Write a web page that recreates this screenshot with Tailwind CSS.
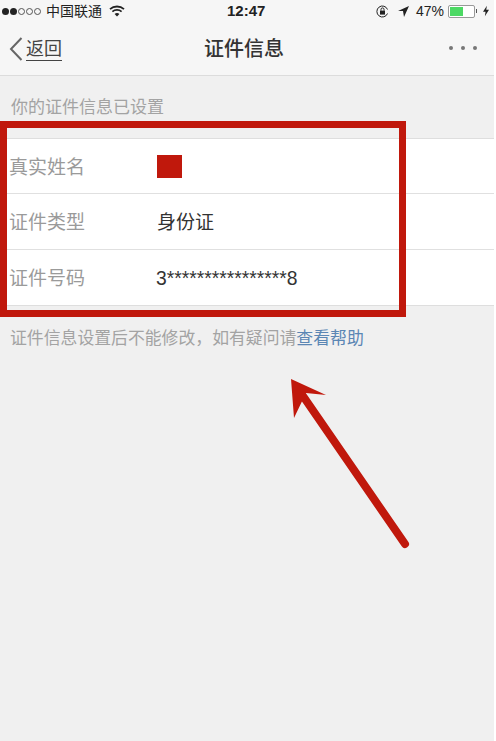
<!DOCTYPE html>
<html lang="zh-CN">
<head>
    <meta charset="UTF-8">
    <meta name="viewport" content="width=device-width, initial-scale=1.0">
    <title>证件信息</title>
    <script src="https://cdn.jsdelivr.net/npm/@tailwindcss/browser@4"></script>
</head>
<body class="bg-white">
<div class="relative h-[741px] w-[494px] overflow-hidden bg-[#f0f0f0] font-['Liberation_Sans','Noto_Sans_CJK_SC',sans-serif]">

    <!-- Status bar + nav -->
    <header class="h-[76px] border-b border-[#dcdcdc] bg-[#f6f6f6]">
        <div class="flex h-[21px] items-center pl-[2px] pt-[1px] text-[#222]">
            <div class="flex w-[225px] items-center">
                <div class="flex items-center gap-[1px]">
                    <span class="h-[7px] w-[7px] rounded-full bg-[#222]"></span>
                    <span class="h-[7px] w-[7px] rounded-full bg-[#222]"></span>
                    <span class="h-[7px] w-[7px] rounded-full border border-[#555]"></span>
                    <span class="h-[7px] w-[7px] rounded-full border border-[#555]"></span>
                    <span class="h-[7px] w-[7px] rounded-full border border-[#555]"></span>
                </div>
                <span class="ml-[5px] text-[14px]">中国联通</span>
                <svg class="ml-[7px]" width="16" height="12" viewBox="0 0 16 12" fill="none" stroke="#222" stroke-width="1.8">
                    <path d="M1 4.200C5 .6 11 .6 15 4.200"/>
                    <path d="M3.400 6.600C6 4.400 10 4.400 12.600 6.600"/>
                    <path d="M8 11.500 5.600 8.900C7 7.800 9 7.800 10.400 8.900Z" fill="#222" stroke="none"/>
                </svg>
            </div>
            <span class="w-[40px] text-[15px] font-bold">12:47</span>
            <div class="ml-[109px] flex items-center">
                <svg width="13" height="13" viewBox="0 0 13 13" fill="none" stroke="#222">
                    <path d="M11.500 8.500A5.500 5.500 0 1 1 11.500 4.500"/>
                    <rect x="4" y="5.600" width="5" height="4" fill="#222" stroke="none"/>
                    <path d="M5 5.600V4.400a1.500 1.500 0 0 1 3 0v1.200"/>
                </svg>
                <svg class="ml-[9px]" width="11" height="11" viewBox="0 0 11 11"><path d="M11 0 0 5h5l1 6Z" fill="#222"/></svg>
                <span class="ml-[7px] text-[14px]">47%</span>
                <div class="ml-[4px] h-[13px] w-[27px] rounded-[2px] border border-[#999] bg-white p-[1px]">
                    <div class="h-full w-[13px] bg-[#4cd964]"></div>
                </div>
                <span class="ml-[1px] h-[4px] w-[1px] bg-[#555]"></span>
                <svg class="ml-[6px]" width="6" height="12" viewBox="0 0 7 12"><path d="M4.500 0 0 7h3l-.8 5L7 4.600H3.800Z" fill="#222"/></svg>
            </div>
        </div>
        <div class="relative flex h-[54px] items-center pl-[204px]">
            <div class="absolute left-[9px] top-[16px] flex items-center">
                <svg width="14" height="24" viewBox="0 0 14 24" fill="none" stroke="#666" stroke-width="2">
                    <path d="M12.500 1 2 12l10.500 11"/>
                </svg>
                <span class="ml-[3px] border-b border-[#444] text-[18px] leading-[22px] text-[#444]">返回</span>
            </div>
            <h1 class="mt-[1px] text-[20px] font-medium text-[#333]">证件信息</h1>
            <div class="absolute right-[17px] top-[25px] flex gap-[8px]">
                <span class="h-[4px] w-[4px] rounded-full bg-[#777]"></span>
                <span class="h-[4px] w-[4px] rounded-full bg-[#777]"></span>
                <span class="h-[4px] w-[4px] rounded-full bg-[#777]"></span>
            </div>
        </div>
    </header>

    <p class="pl-[11px] pt-[22px] text-[17px] leading-[20px] text-[#a3a3a3]">你的证件信息已设置</p>

    <!-- Info card -->
    <section class="mt-[20px] border-y border-[#dedede] bg-white text-[19px]">
        <div class="flex h-[55px] items-center border-b border-[#e0e0e0] pl-[9px] pt-[4px]">
            <span class="w-[148px] text-[#9a9a9a]">真实姓名</span>
            <span class="-mt-[3px] h-[23px] w-[25px] bg-[#c0180c]"></span>
        </div>
        <div class="flex h-[56px] items-center border-b border-[#e0e0e0] pl-[9px] pt-[3px]">
            <span class="w-[148px] text-[#9a9a9a]">证件类型</span>
            <span class="text-[#333]">身份证</span>
        </div>
        <div class="flex h-[55px] items-center pl-[9px] pt-[3px]">
            <span class="w-[147px] text-[#9a9a9a]">证件号码</span>
            <span class="text-[19.3px] text-[#333]">3****************8</span>
        </div>
    </section>

    <p class="pl-[10px] pt-[23px] text-[16.85px] leading-[20px] text-[#a3a3a3]">证件信息设置后不能修改，如有疑问请<span class="text-[#5b86b4]">查看帮助</span></p>

    <!-- Red annotations drawn over the screenshot -->
    <div class="absolute left-0 top-[121px] h-[196px] w-[406px] border-[7px] border-[#c0180c]"></div>
    <svg class="absolute left-0 top-0" width="494" height="741" viewBox="0 0 494 741" fill="none">
        <path d="M405 544 303 396" stroke="#c0180c" stroke-width="8" stroke-linecap="round"/>
        <path d="M291 379 326 395 306 393 294 418Z" fill="#c0180c"/>
    </svg>
</div>
</body>
</html>
